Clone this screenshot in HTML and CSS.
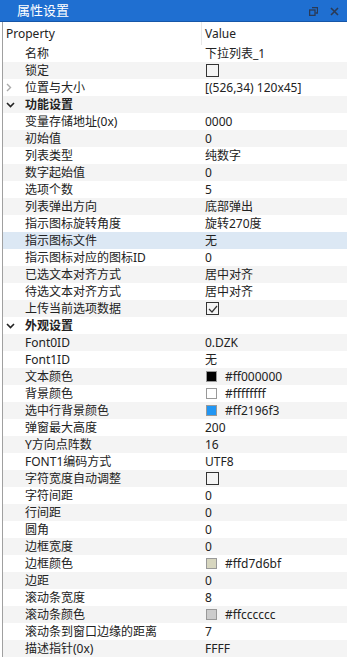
FILE: index.html
```html
<!DOCTYPE html>
<html>
<head>
    <meta charset="UTF-8">
    <title>属性设置</title>
    <link rel="stylesheet" href="styles.css">
</head>
<body>
    <div class="panel">
        <div class="title-bar">
            <span class="title">属性设置</span>
            <div class="title-buttons">
                <svg class="btn-icon" width="9" height="9" viewBox="0 0 9 9">
                    <path d="M3 0.5h5.5v5.5h-2" fill="none" stroke="#2b3a55" stroke-width="1.3"/>
                    <rect x="0.6" y="3" width="5.4" height="5.4" fill="none" stroke="#2b3a55" stroke-width="1.3"/>
                </svg>
                <svg class="btn-icon" width="9" height="9" viewBox="0 0 9 9">
                    <path d="M1 1L8 8M8 1L1 8" stroke="#2b3a55" stroke-width="1.6"/>
                </svg>
            </div>
        </div>
        <div class="grid">
            <div class="header">
                <div class="h-name">Property</div>
                <div class="h-value">Value</div>
            </div>
            <div class="rows">
                <div class="row"><span class="mark"></span><span class="name">名称</span><span class="value">下拉列表_1</span></div>
                <div class="row"><span class="mark"></span><span class="name">锁定</span><span class="value"><span class="check"></span></span></div>
                <div class="row"><span class="mark"><svg width="6" height="9" viewBox="0 0 6 9"><path d="M1 1l3.5 3.5L1 8" fill="none" stroke="#aaa" stroke-width="1.4"/></svg></span><span class="name">位置与大小</span><span class="value">[(526,34) 120x45]</span></div>
                <div class="row cat"><span class="mark"><svg width="9" height="6" viewBox="0 0 9 6"><path d="M1 1l3.5 3.5L8 1" fill="none" stroke="#222" stroke-width="1.6"/></svg></span><span class="name">功能设置</span><span class="value"></span></div>
                <div class="row"><span class="mark"></span><span class="name">变量存储地址(0x)</span><span class="value">0000</span></div>
                <div class="row"><span class="mark"></span><span class="name">初始值</span><span class="value">0</span></div>
                <div class="row"><span class="mark"></span><span class="name">列表类型</span><span class="value">纯数字</span></div>
                <div class="row"><span class="mark"></span><span class="name">数字起始值</span><span class="value">0</span></div>
                <div class="row"><span class="mark"></span><span class="name">选项个数</span><span class="value">5</span></div>
                <div class="row"><span class="mark"></span><span class="name">列表弹出方向</span><span class="value">底部弹出</span></div>
                <div class="row"><span class="mark"></span><span class="name">指示图标旋转角度</span><span class="value">旋转270度</span></div>
                <div class="row selected"><span class="mark"></span><span class="name">指示图标文件</span><span class="value">无</span></div>
                <div class="row"><span class="mark"></span><span class="name">指示图标对应的图标ID</span><span class="value">0</span></div>
                <div class="row"><span class="mark"></span><span class="name">已选文本对齐方式</span><span class="value">居中对齐</span></div>
                <div class="row"><span class="mark"></span><span class="name">待选文本对齐方式</span><span class="value">居中对齐</span></div>
                <div class="row"><span class="mark"></span><span class="name">上传当前选项数据</span><span class="value"><span class="check"><svg width="10" height="8" viewBox="0 0 10 8"><path d="M1 4l3 3 5-6" fill="none" stroke="#333" stroke-width="1.2"/></svg></span></span></div>
                <div class="row cat"><span class="mark"><svg width="9" height="6" viewBox="0 0 9 6"><path d="M1 1l3.5 3.5L8 1" fill="none" stroke="#222" stroke-width="1.6"/></svg></span><span class="name">外观设置</span><span class="value"></span></div>
                <div class="row"><span class="mark"></span><span class="name">Font0ID</span><span class="value">0.DZK</span></div>
                <div class="row"><span class="mark"></span><span class="name">Font1ID</span><span class="value">无</span></div>
                <div class="row"><span class="mark"></span><span class="name">文本颜色</span><span class="value"><span class="swatch" style="background-color: #000000;"></span>#ff000000</span></div>
                <div class="row"><span class="mark"></span><span class="name">背景颜色</span><span class="value"><span class="swatch" style="background-color: #ffffff;"></span>#ffffffff</span></div>
                <div class="row"><span class="mark"></span><span class="name">选中行背景颜色</span><span class="value"><span class="swatch" style="background-color: #2196f3;"></span>#ff2196f3</span></div>
                <div class="row"><span class="mark"></span><span class="name">弹窗最大高度</span><span class="value">200</span></div>
                <div class="row"><span class="mark"></span><span class="name">Y方向点阵数</span><span class="value">16</span></div>
                <div class="row"><span class="mark"></span><span class="name">FONT1编码方式</span><span class="value">UTF8</span></div>
                <div class="row"><span class="mark"></span><span class="name">字符宽度自动调整</span><span class="value"><span class="check"></span></span></div>
                <div class="row"><span class="mark"></span><span class="name">字符间距</span><span class="value">0</span></div>
                <div class="row"><span class="mark"></span><span class="name">行间距</span><span class="value">0</span></div>
                <div class="row"><span class="mark"></span><span class="name">圆角</span><span class="value">0</span></div>
                <div class="row"><span class="mark"></span><span class="name">边框宽度</span><span class="value">0</span></div>
                <div class="row"><span class="mark"></span><span class="name">边框颜色</span><span class="value"><span class="swatch" style="background-color: #d7d6bf;"></span>#ffd7d6bf</span></div>
                <div class="row"><span class="mark"></span><span class="name">边距</span><span class="value">0</span></div>
                <div class="row"><span class="mark"></span><span class="name">滚动条宽度</span><span class="value">8</span></div>
                <div class="row"><span class="mark"></span><span class="name">滚动条颜色</span><span class="value"><span class="swatch" style="background-color: #cccccc;"></span>#ffcccccc</span></div>
                <div class="row"><span class="mark"></span><span class="name">滚动条到窗口边缘的距离</span><span class="value">7</span></div>
                <div class="row"><span class="mark"></span><span class="name">描述指针(0x)</span><span class="value">FFFF</span></div>
            </div>
        </div>
    </div>
</body>
</html>
```

FILE: styles.css
```css
body {
    margin: 0;
    background-color: #fff;
    font-family: "Noto Sans", "Noto Sans CJK SC", sans-serif;
    font-size: 12px;
    color: #222;
}

.panel {
    width: 347px;
    height: 664px;
    overflow: hidden;
}

.title-bar {
    height: 21px;
    background-color: #1f6fd1;
    border-bottom: 1px solid #1656a8;
    display: flex;
    align-items: center;
    justify-content: space-between;
    padding: 0 8px 0 17px;
}

.title {
    color: #fff;
    font-size: 13px;
    line-height: 21px;
}

.title-buttons {
    display: flex;
    align-items: center;
    gap: 12px;
    padding-top: 2px;
}

.btn-icon {
    display: block;
}

.grid {
    border-left: 1px solid #a0a0a0;
    margin-left: 2px;
}

.header {
    display: flex;
    height: 23px;
    align-items: center;
    background-color: #fff;
}

.h-name {
    width: 199px;
    padding-left: 3px;
    font-size: 12px;
    border-right: 1px solid #e8e8e8;
    height: 23px;
    line-height: 23px;
    box-sizing: border-box;
}

.h-value {
    padding-left: 3px;
}

.row {
    display: flex;
    height: 17px;
    line-height: 17px;
    align-items: center;
}

.row:nth-child(even) {
    background-color: #f4f4f4;
}

.row.selected {
    background-color: #dce8f4;
}

.mark {
    width: 19px;
    padding-left: 3px;
    flex: none;
    display: flex;
    align-items: center;
}

.mark svg {
    display: block;
}

.name {
    width: 180px;
    flex: none;
    white-space: nowrap;
}

.cat .name {
    font-weight: bold;
}

.value {
    display: flex;
    align-items: center;
    white-space: nowrap;
}

.check {
    width: 11px;
    height: 11px;
    border: 1px solid #333;
    display: flex;
    align-items: center;
    justify-content: center;
    margin-left: 1px;
}

.swatch {
    width: 9px;
    height: 9px;
    border: 1px solid #999;
    margin: 0 8px 0 1px;
}
```
